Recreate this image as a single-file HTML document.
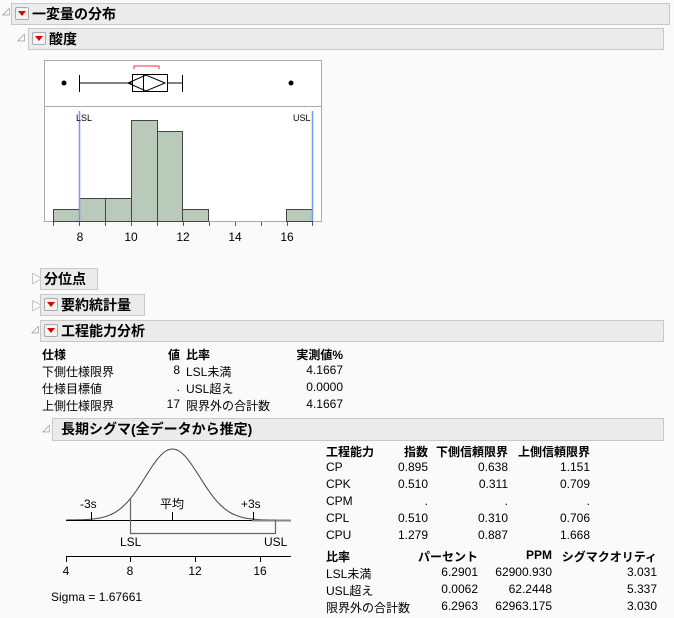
<!DOCTYPE html>
<html><head><meta charset="utf-8"><style>
body{margin:0;width:674px;height:618px;background:#fafafa;font-family:"Liberation Sans","Noto Sans CJK JP",sans-serif;font-size:12px;color:#000;position:relative;overflow:hidden}
.a{position:absolute;white-space:nowrap}
.hdr{position:absolute;background:#ebebeb;border:1px solid #c8c8c8;font-weight:bold;font-size:14px;line-height:20px;box-sizing:border-box}
.btn{display:inline-block;width:12px;height:11px;border:1px solid #aaa;border-radius:2px;background:#f4f4f4;vertical-align:-1px;margin:0 3px 0 3px;position:relative}
.btn:after{content:"";position:absolute;left:2px;top:3px;border-left:4px solid transparent;border-right:4px solid transparent;border-top:5px solid #d00}
.tri{position:absolute;font-size:10px;color:#888}
.r{text-align:right}
</style></head><body>
<span class="tri" style="left:2px;top:6px">◿</span>
<div class="hdr" style="left:11px;top:3px;width:659px;height:22px"><span class="btn"></span>一変量の分布</div>
<span class="tri" style="left:17px;top:32px">◿</span>
<div class="hdr" style="left:28px;top:28px;width:636px;height:22px"><span class="btn"></span>酸度</div>

<svg class="a" style="left:0;top:0" width="674" height="618">
<rect x="44.5" y="60.5" width="277" height="161" fill="#fff" stroke="#aaa"/>
<line x1="44" y1="106.5" x2="322" y2="106.5" stroke="#aaa"/>
<circle cx="64" cy="83" r="2.5" fill="#000"/><circle cx="291" cy="83" r="2.5" fill="#000"/>
<line x1="80" y1="83" x2="132" y2="83" stroke="#000"/><line x1="167" y1="83" x2="182" y2="83" stroke="#000"/>
<line x1="79.5" y1="75" x2="79.5" y2="92" stroke="#000"/><line x1="182.5" y1="75" x2="182.5" y2="92" stroke="#000"/>
<rect x="132.5" y="74.5" width="35" height="17" fill="none" stroke="#000"/>
<line x1="143.5" y1="74" x2="143.5" y2="92" stroke="#000"/>
<polyline points="128,83 146,75 165,83 146,91 128,83" fill="none" stroke="#000"/>
<polyline points="134,69 134,66 159,66 159,69" fill="none" stroke="#e03040"/>
<g fill="#b9c9ba" stroke="#444">
<rect x="53.5" y="209.5" width="26" height="12"/><rect x="79.5" y="198.5" width="26" height="23"/><rect x="105.5" y="198.5" width="26" height="23"/>
<rect x="131.5" y="120.5" width="26" height="101"/><rect x="157.5" y="131.5" width="25" height="90"/><rect x="182.5" y="209.5" width="26" height="12"/>
<rect x="286.5" y="209.5" width="26" height="12"/></g>
<line x1="79.5" y1="111" x2="79.5" y2="221" stroke="#6f9cf0" stroke-width="1.5"/>
<line x1="312.5" y1="111" x2="312.5" y2="221" stroke="#6f9cf0" stroke-width="1.5"/>
<text x="76" y="121" font-size="9" font-family="Liberation Sans">LSL</text>
<text x="293" y="121" font-size="9" font-family="Liberation Sans">USL</text>
<g stroke="#555"><line x1="53.5" y1="222" x2="53.5" y2="226"/><line x1="79.5" y1="222" x2="79.5" y2="226"/><line x1="105.5" y1="222" x2="105.5" y2="226"/><line x1="131.5" y1="222" x2="131.5" y2="226"/><line x1="157.5" y1="222" x2="157.5" y2="226"/><line x1="183.5" y1="222" x2="183.5" y2="226"/><line x1="209.5" y1="222" x2="209.5" y2="226"/><line x1="235.5" y1="222" x2="235.5" y2="226"/><line x1="261.5" y1="222" x2="261.5" y2="226"/><line x1="287.5" y1="222" x2="287.5" y2="226"/><line x1="312.5" y1="222" x2="312.5" y2="226"/></g>
<g font-size="12" font-family="Liberation Sans" text-anchor="middle"><text x="80" y="241">8</text><text x="131" y="241">10</text><text x="183" y="241">12</text><text x="235" y="241">14</text><text x="287" y="241">16</text></g>

<!-- normal curve -->
<path id="c" fill="none" stroke="#444" d=""/>
<line x1="66" y1="520.5" x2="291" y2="520.5" stroke="#000"/>
<line x1="252" y1="520.5" x2="291" y2="520.5" stroke="#888" stroke-width="2"/>
<line x1="91.5" y1="512" x2="91.5" y2="520" stroke="#000"/><line x1="172.5" y1="512" x2="172.5" y2="520" stroke="#000"/><line x1="253.5" y1="512" x2="253.5" y2="520" stroke="#000"/>
<polyline points="130.5,498 130.5,533.5 275.5,533.5 275.5,520" fill="none" stroke="#666" stroke-width="1.2"/>
<text x="80" y="508" font-size="12" font-family="Liberation Sans">-3s</text>
<text x="160" y="508" font-size="12" font-family="Liberation Sans,Noto Sans CJK JP">平均</text>
<text x="241" y="508" font-size="12" font-family="Liberation Sans">+3s</text>
<text x="120" y="546" font-size="12" font-family="Liberation Sans">LSL</text>
<text x="264" y="546" font-size="12" font-family="Liberation Sans">USL</text>
<line x1="66" y1="556.5" x2="291" y2="556.5" stroke="#000"/>
<g stroke="#000"><line x1="66.5" y1="556" x2="66.5" y2="562"/><line x1="130.5" y1="556" x2="130.5" y2="562"/><line x1="195.5" y1="556" x2="195.5" y2="562"/><line x1="260.5" y1="556" x2="260.5" y2="562"/></g>
<g font-size="12" font-family="Liberation Sans" text-anchor="middle"><text x="66" y="575">4</text><text x="130" y="575">8</text><text x="195" y="575">12</text><text x="260" y="575">16</text></g>
<text x="51" y="601" font-size="12" font-family="Liberation Sans">Sigma = 1.67661</text>
</svg>
<script>
(function(){var d="",m=172.5,s=27.2;for(var x=66;x<=291;x+=1){var z=(x-m)/s;var y=520-71*Math.exp(-z*z/2);d+=(x==66?"M":"L")+x+","+y.toFixed(1);}document.getElementById("c").setAttribute("d",d);})();
</script>

<span class="tri" style="left:31px;top:270px;font-size:12px">▷</span>
<div class="hdr" style="left:40px;top:268px;width:58px;height:22px;padding-left:3px">分位点</div>
<span class="tri" style="left:31px;top:297px;font-size:12px">▷</span>
<div class="hdr" style="left:40px;top:294px;width:105px;height:22px"><span class="btn"></span>要約統計量</div>
<span class="tri" style="left:31px;top:324px">◿</span>
<div class="hdr" style="left:40px;top:320px;width:624px;height:22px"><span class="btn"></span>工程能力分析</div>

<div class="a" style="left:42px;top:346px;font-weight:bold">仕様</div>
<div class="a r" style="left:150px;top:346px;width:30px;font-weight:bold">値</div>
<div class="a" style="left:186px;top:346px;font-weight:bold">比率</div>
<div class="a r" style="left:270px;top:346px;width:73px;font-weight:bold">実測値%</div>
<div class="a" style="left:42px;top:363px">下側仕様限界</div><div class="a r" style="left:150px;top:363px;width:30px">8</div><div class="a" style="left:186px;top:363px">LSL未満</div><div class="a r" style="left:270px;top:363px;width:73px">4.1667</div>
<div class="a" style="left:42px;top:380px">仕様目標値</div><div class="a r" style="left:150px;top:380px;width:30px">.</div><div class="a" style="left:186px;top:380px">USL超え</div><div class="a r" style="left:270px;top:380px;width:73px">0.0000</div>
<div class="a" style="left:42px;top:397px">上側仕様限界</div><div class="a r" style="left:150px;top:397px;width:30px">17</div><div class="a" style="left:186px;top:397px">限界外の合計数</div><div class="a r" style="left:270px;top:397px;width:73px">4.1667</div>

<span class="tri" style="left:42px;top:423px">◿</span>
<div class="hdr" style="left:52px;top:418px;width:612px;height:23px;padding-left:8px;line-height:21px">長期シグマ(全データから推定)</div>

<div class="a" style="left:326px;top:443px;font-weight:bold">工程能力</div>
<div class="a r" style="left:380px;top:443px;width:48px;font-weight:bold">指数</div>
<div class="a r" style="left:430px;top:443px;width:78px;font-weight:bold">下側信頼限界</div>
<div class="a r" style="left:510px;top:443px;width:80px;font-weight:bold">上側信頼限界</div>
<div class="a" style="left:326px;top:460px">CP</div><div class="a r" style="left:380px;top:460px;width:48px">0.895</div><div class="a r" style="left:430px;top:460px;width:78px">0.638</div><div class="a r" style="left:510px;top:460px;width:80px">1.151</div>
<div class="a" style="left:326px;top:477px">CPK</div><div class="a r" style="left:380px;top:477px;width:48px">0.510</div><div class="a r" style="left:430px;top:477px;width:78px">0.311</div><div class="a r" style="left:510px;top:477px;width:80px">0.709</div>
<div class="a" style="left:326px;top:494px">CPM</div><div class="a r" style="left:380px;top:494px;width:48px">.</div><div class="a r" style="left:430px;top:494px;width:78px">.</div><div class="a r" style="left:510px;top:494px;width:80px">.</div>
<div class="a" style="left:326px;top:511px">CPL</div><div class="a r" style="left:380px;top:511px;width:48px">0.510</div><div class="a r" style="left:430px;top:511px;width:78px">0.310</div><div class="a r" style="left:510px;top:511px;width:80px">0.706</div>
<div class="a" style="left:326px;top:528px">CPU</div><div class="a r" style="left:380px;top:528px;width:48px">1.279</div><div class="a r" style="left:430px;top:528px;width:78px">0.887</div><div class="a r" style="left:510px;top:528px;width:80px">1.668</div>

<div class="a" style="left:326px;top:548px;font-weight:bold">比率</div>
<div class="a r" style="left:400px;top:548px;width:78px;font-weight:bold">パーセント</div>
<div class="a r" style="left:480px;top:548px;width:72px;font-weight:bold">PPM</div>
<div class="a r" style="left:555px;top:548px;width:102px;font-weight:bold">シグマクオリティ</div>
<div class="a" style="left:326px;top:565px">LSL未満</div><div class="a r" style="left:400px;top:565px;width:78px">6.2901</div><div class="a r" style="left:480px;top:565px;width:72px">62900.930</div><div class="a r" style="left:555px;top:565px;width:102px">3.031</div>
<div class="a" style="left:326px;top:582px">USL超え</div><div class="a r" style="left:400px;top:582px;width:78px">0.0062</div><div class="a r" style="left:480px;top:582px;width:72px">62.2448</div><div class="a r" style="left:555px;top:582px;width:102px">5.337</div>
<div class="a" style="left:326px;top:599px">限界外の合計数</div><div class="a r" style="left:400px;top:599px;width:78px">6.2963</div><div class="a r" style="left:480px;top:599px;width:72px">62963.175</div><div class="a r" style="left:555px;top:599px;width:102px">3.030</div>
</body></html>
